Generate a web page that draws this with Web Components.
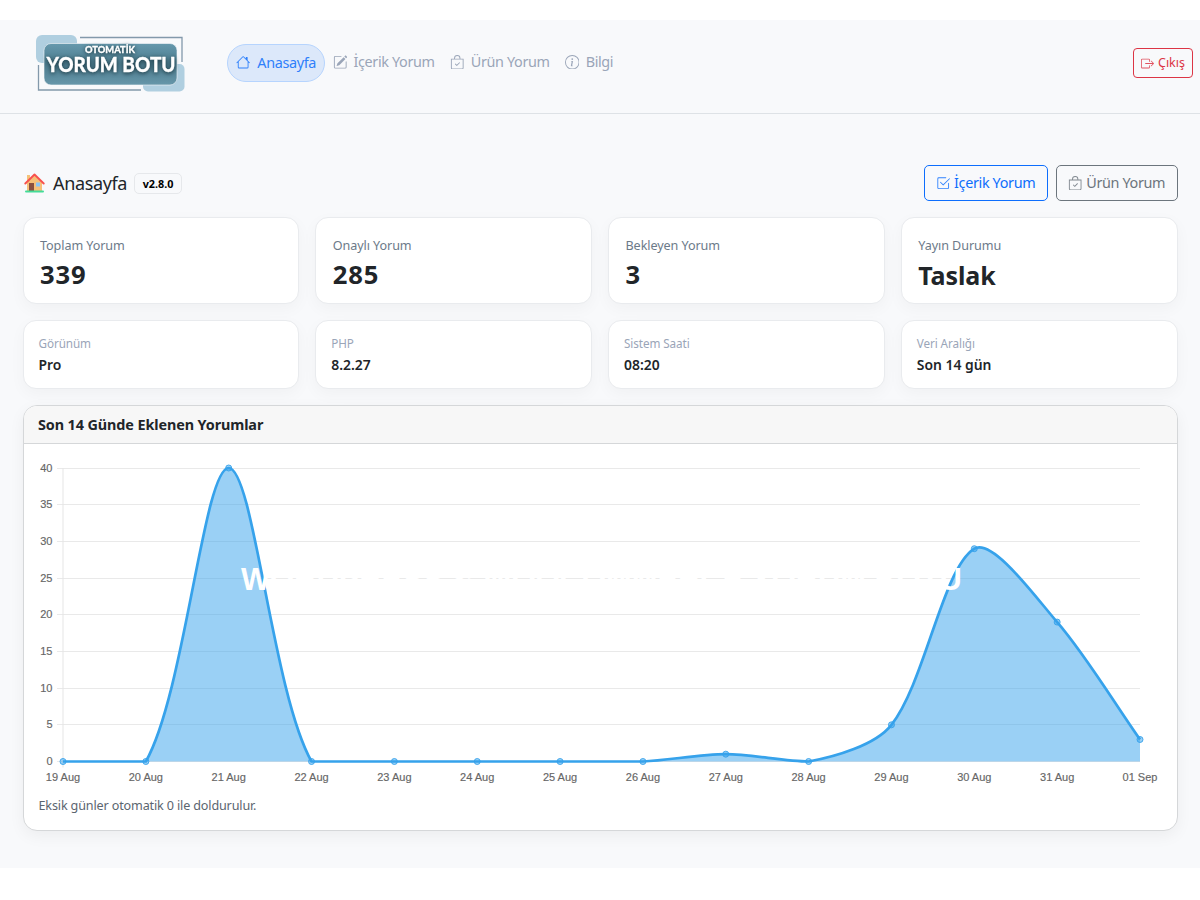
<!DOCTYPE html>
<html lang="tr">
<head>
<meta charset="utf-8">
<title>Otomatik Yorum Botu</title>
<style>
  body {
    margin: 0;
    background: #fff;
    color: #212529;
    font-family: "Noto Sans", "Open Sans", sans-serif;
  }
</style>
</head>
<body>
<app-shell>
  <app-header slot="header">
    <nav-item icon="house" active>Anasayfa</nav-item>
    <nav-item icon="pencil">İçerik Yorum</nav-item>
    <nav-item icon="bag">Ürün Yorum</nav-item>
    <nav-item icon="info">Bilgi</nav-item>
    <outline-button slot="end" icon="exit" variant="danger" size="sm">Çıkış</outline-button>
  </app-header>

  <page-title version="v2.8.0">
    Anasayfa
    <outline-button slot="actions" icon="check" variant="primary">İçerik Yorum</outline-button>
    <outline-button slot="actions" icon="bag" variant="secondary">Ürün Yorum</outline-button>
  </page-title>

  <card-row>
    <stat-card number label="Toplam Yorum">339</stat-card>
    <stat-card number label="Onaylı Yorum">285</stat-card>
    <stat-card number label="Bekleyen Yorum">3</stat-card>
    <stat-card label="Yayın Durumu">Taslak</stat-card>
  </card-row>
  <card-row>
    <stat-card small label="Görünüm">Pro</stat-card>
    <stat-card small label="PHP">8.2.27</stat-card>
    <stat-card small label="Sistem Saati">08:20</stat-card>
    <stat-card small label="Veri Aralığı">Son 14 gün</stat-card>
  </card-row>

  <chart-card>
    <span slot="title">Son 14 Günde Eklenen Yorumlar</span>
    <line-chart values="0,0,40,0,0,0,0,0,1,0,5,29,19,3"
      labels="19 Aug,20 Aug,21 Aug,22 Aug,23 Aug,24 Aug,25 Aug,26 Aug,27 Aug,28 Aug,29 Aug,30 Aug,31 Aug,01 Sep"></line-chart>
    <span slot="watermark">WORDPRESS &amp; WOOCOMMERCE YORUM BOTU</span>
    <span slot="note">Eksik günler otomatik 0 ile doldurulur.</span>
  </chart-card>
</app-shell>

<script>
const ICONS = {
  house: '<path d="M8.707 1.5a1 1 0 0 0-1.414 0L.646 8.146a.5.5 0 0 0 .708.708L2 8.207V13.5A1.5 1.5 0 0 0 3.5 15h9a1.5 1.5 0 0 0 1.5-1.5V8.207l.646.647a.5.5 0 0 0 .708-.708L13 5.793V2.5a.5.5 0 0 0-.5-.5h-1a.5.5 0 0 0-.5.5v1.293zM13 7.207V13.5a.5.5 0 0 1-.5.5h-9a.5.5 0 0 1-.5-.5V7.207l5-5z"/>',
  pencil: '<path d="M15.502 1.94a.5.5 0 0 1 0 .706L14.459 3.69l-2-2L13.502.646a.5.5 0 0 1 .707 0zm-1.75 2.456-2-2L4.939 9.21a.5.5 0 0 0-.121.196l-.805 2.414a.25.25 0 0 0 .316.316l2.414-.805a.5.5 0 0 0 .196-.12z"/><path d="M1 13.5A1.5 1.5 0 0 0 2.5 15h11a1.5 1.5 0 0 0 1.5-1.5v-6a.5.5 0 0 0-1 0v6a.5.5 0 0 1-.5.5h-11a.5.5 0 0 1-.5-.5v-11a.5.5 0 0 1 .5-.5H9a.5.5 0 0 0 0-1H2.5A1.5 1.5 0 0 0 1 2.5z"/>',
  bag: '<path d="M10.854 8.146a.5.5 0 0 1 0 .708l-3 3a.5.5 0 0 1-.708 0l-1.5-1.5a.5.5 0 0 1 .708-.708L7.5 10.793l2.646-2.647a.5.5 0 0 1 .708 0"/><path d="M8 1a2.5 2.5 0 0 1 2.5 2.5V4h-5v-.5A2.5 2.5 0 0 1 8 1m3.500 3v-.5a3.500 3.500 0 1 0-7 0V4H1v10a2 2 0 0 0 2 2h10a2 2 0 0 0 2-2V4zM2 5h12v9a1 1 0 0 1-1 1H3a1 1 0 0 1-1-1z"/>',
  info: '<path d="M8 15A7 7 0 1 1 8 1a7 7 0 0 1 0 14m0 1A8 8 0 1 0 8 0a8 8 0 0 0 0 16"/><path d="m8.930 6.588-2.290.287-.082.380.450.083c.294.070.352.176.288.469l-.738 3.468c-.194.897.105 1.319.808 1.319.545 0 1.178-.252 1.465-.598l.088-.416c-.200.176-.492.246-.686.246-.275 0-.375-.193-.304-.533zM9 4.500a1 1 0 1 1-2 0 1 1 0 0 1 2 0"/>',
  check: '<path d="M3 14.500A1.500 1.500 0 0 1 1.500 13V3A1.500 1.500 0 0 1 3 1.500h8a.5.5 0 0 1 0 1H3a.5.5 0 0 0-.5.5v10a.5.5 0 0 0 .5.5h10a.5.5 0 0 0 .5-.5V8a.5.5 0 0 1 1 0v5a1.500 1.500 0 0 1-1.500 1.500z"/><path d="m8.354 10.354 7-7a.5.5 0 0 0-.708-.708L8 9.293 5.354 6.646a.5.5 0 1 0-.708.708l3 3a.5.5 0 0 0 .708 0"/>',
  exit: '<path fill-rule="evenodd" d="M10 12.500a.5.5 0 0 1-.5.5h-8a.5.5 0 0 1-.5-.5v-9a.5.5 0 0 1 .5-.5h8a.5.5 0 0 1 .5.5v2a.5.5 0 0 0 1 0v-2A1.500 1.500 0 0 0 9.500 2h-8A1.500 1.500 0 0 0 0 3.500v9A1.500 1.500 0 0 0 1.500 14h8a1.500 1.500 0 0 0 1.500-1.500v-2a.5.5 0 0 0-1 0z"/><path fill-rule="evenodd" d="M15.854 8.354a.5.5 0 0 0 0-.708l-3-3a.5.5 0 0 0-.708.708L14.293 7.500H5.500a.5.5 0 0 0 0 1h8.793l-2.147 2.146a.5.5 0 0 0 .708.708z"/>'
};

function icon(name) {
  return `<svg viewBox="0 0 16 16" fill="currentColor">${ICONS[name]}</svg>`;
}

class BaseElement extends HTMLElement {
  constructor() {
    super();
    this.attachShadow({ mode: 'open' });
  }
  connectedCallback() {
    this.shadowRoot.innerHTML = this.render();
  }
}

customElements.define('app-shell', class extends BaseElement {
  render() {
    return `
<style>
  :host { display: block; padding: 20px 0 32px; }
  .page { background: #f8f9fb; height: 848px; }
  main { display: flex; flex-direction: column; gap: 16px; padding: 51px 22.500px 0; }
</style>
<div class="page">
  <slot name="header"></slot>
  <main><slot></slot></main>
</div>`;
  }
});

customElements.define('site-logo', class extends BaseElement {
  render() {
    return `
<style>
  :host { display: block; width: 150px; height: 58px; margin-top: 2px; }
  svg { display: block; }
  text { font-family: Lato, sans-serif; font-weight: 900; fill: #fff; stroke: #fff; stroke-width: .3px; }
  .shade { filter: drop-shadow(0 1px 2px #16323c); }
</style>
<svg width="150" height="58" viewBox="0 0 150 58">
  <defs>
    <linearGradient id="plate" x1="0" y1="0" x2="0" y2="1">
      <stop offset="0" stop-color="#6699ad"/><stop offset=".5" stop-color="#4c7b8d"/><stop offset="1" stop-color="#6797aa"/>
    </linearGradient>
  </defs>
  <path d="M44 3.500H146V28M2.500 31V56H105" fill="none" stroke="#8399ab" stroke-width="1.300"/>
  <rect x="0" y="1" width="41" height="28" rx="6" fill="#b0cfe0"/>
  <rect x="107" y="30" width="41.500" height="27.500" rx="5" fill="#b0cfe0"/>
  <rect x="8" y="9.500" width="133" height="41.500" rx="7" fill="url(#plate)" stroke="#f8f9fb" stroke-width=".6"/>
  <g class="shade">
    <text x="49" y="18.500" font-size="9.500" textLength="50" lengthAdjust="spacingAndGlyphs">OTOMATİK</text>
    <text x="10.500" y="38" font-size="20.500" textLength="129" lengthAdjust="spacingAndGlyphs">YORUM BOTU</text>
  </g>
</svg>`;
  }
});

customElements.define('app-header', class extends BaseElement {
  render() {
    return `
<style>
  :host {
    display: flex;
    align-items: center;
    box-sizing: border-box;
    height: 94px;
    padding: 0 7px 9px 36px;
    border-bottom: 1px solid #dee2e6;
  }
  nav { display: flex; align-items: center; margin-left: 41px; }
  .end { margin-left: auto; }
</style>
<site-logo></site-logo>
<nav><slot></slot></nav>
<div class="end"><slot name="end"></slot></div>`;
  }
});

customElements.define('nav-item', class extends BaseElement {
  render() {
    return `
<style>
  :host {
    display: flex;
    align-items: center;
    box-sizing: border-box;
    height: 38px;
    padding: 0 7.500px;
    gap: 6.500px;
    color: #9aa5b8;
    font-size: 14.400px;
    letter-spacing: -.35px;
    line-height: 20px;
    white-space: nowrap;
  }
  :host([active]) {
    width: 98px;
    padding: 0 8px;
    gap: 7px;
    margin-top: 1px;
    border: 1px solid #b6d4fe;
    border-radius: 19px;
    background: #dce8fa;
    color: #2f80fb;
  }
  svg { width: 14.500px; height: 14.500px; }
</style>
${icon(this.getAttribute('icon'))}<span><slot></slot></span>`;
  }
});

customElements.define('outline-button', class extends BaseElement {
  render() {
    return `
<style>
  :host {
    display: flex;
    align-items: center;
    justify-content: center;
    box-sizing: border-box;
    height: 36px;
    width: 124px;
    gap: 4px;
    border: 1px solid currentColor;
    border-radius: 5px;
    color: #0d6efd;
    font-size: 14.400px;
    letter-spacing: -.35px;
    line-height: 20px;
    white-space: nowrap;
  }
  :host([variant=secondary]) { color: #6c757d; width: 122px; }
  :host([variant=danger]) { color: #dc3545; }
  :host([size=sm]) {
    width: 60px;
    height: 30px;
    margin-top: 2px;
    border-radius: 4px;
    font-size: 12.500px;
    letter-spacing: 0;
  }
  svg { width: 14.400px; height: 14.400px; opacity: .85; }
  :host([size=sm]) svg { width: 13px; height: 13px; }
</style>
${icon(this.getAttribute('icon'))}<span><slot></slot></span>`;
  }
});

customElements.define('page-title', class extends BaseElement {
  render() {
    return `
<style>
  :host { display: flex; align-items: center; height: 36px; }
  .emoji { width: 21px; height: 20px; margin: 0 8px 0 1.500px; }
  h1 { margin: 0; font-size: 18px; font-weight: 400; line-height: 28px; letter-spacing: -.35px; }
  .version {
    box-sizing: border-box;
    height: 21px;
    margin-left: 7px;
    padding: 0 7.500px;
    border: 1px solid #e6e8eb;
    border-radius: 5px;
    font-size: 10.800px;
    font-weight: 700;
    line-height: 19px;
    color: #000;
  }
  .actions { display: flex; gap: 8px; margin-left: auto; }
</style>
<svg class="emoji" viewBox="0 0 21 20">
  <path d="M3 2h3v7H3z" fill="#f5c27a"/>
  <path d="M3 9.500 10.500 2 18 9.500V18H3z" fill="#f6bf78"/>
  <path d="M1.300 10.500 10.500 1.500l9.200 9" fill="none" stroke="#f8514e" stroke-width="1.900" stroke-linecap="round" stroke-linejoin="round"/>
  <path d="M5 10h5v8H5z" fill="#8a4f3f"/>
  <path d="M12 9.500h4v4h-4z" fill="#8cc4f3"/>
  <rect x="1" y="17.500" width="19" height="2" rx="1" fill="#43dc98"/>
</svg>
<h1><slot></slot></h1>
<span class="version">${this.getAttribute('version')}</span>
<div class="actions"><slot name="actions"></slot></div>`;
  }
});

customElements.define('card-row', class extends BaseElement {
  render() {
    return `
<style>
  :host { display: grid; grid-template-columns: repeat(4, 1fr); gap: 16px; }
</style>
<slot></slot>`;
  }
});

customElements.define('stat-card', class extends BaseElement {
  render() {
    return `
<style>
  :host {
    display: flex;
    flex-direction: column;
    box-sizing: border-box;
    height: 87px;
    padding: 19px 16.500px 0;
    border: 1px solid #e9ebee;
    border-radius: 13px;
    background: #fff;
    box-shadow: 0 5px 16px rgba(0, 0, 0, .035);
  }
  .label { font-size: 12.600px; line-height: 18px; color: #6c7a89; letter-spacing: -.08px; }
  .value { margin-top: 2px; font-size: 25px; font-weight: 700; line-height: 36px; letter-spacing: -.1px; }
  :host([number]) .value { font-size: 25.600px; letter-spacing: .8px; }
  :host([small]) { height: 69px; padding: 13px 15px 0; }
  :host([small]) .label { font-size: 11.700px; color: #9aa5b8; }
  :host([small]) .value { margin-top: 3px; font-size: 13.900px; font-weight: 600; line-height: 20px; letter-spacing: 0; }
</style>
<span class="label">${this.getAttribute('label')}</span>
<span class="value"><slot></slot></span>`;
  }
});

customElements.define('chart-card', class extends BaseElement {
  render() {
    return `
<style>
  :host {
    display: flex;
    flex-direction: column;
    position: relative;
    box-sizing: border-box;
    height: 426px;
    border: 1px solid #d5d7d9;
    border-radius: 14px;
    background: #fff;
    box-shadow: 0 5px 16px rgba(0, 0, 0, .05);
  }
  header {
    height: 37px;
    padding-left: 14.500px;
    border-bottom: 1px solid #d5d7d9;
    border-radius: 13px 13px 0 0;
    background: #f7f7f7;
    font-size: 14.400px;
    font-weight: 700;
    line-height: 37px;
    letter-spacing: -.1px;
  }
  .note {
    padding: 1px 15px 0;
    font-size: 12.600px;
    line-height: 18px;
    letter-spacing: -.15px;
    color: #5b6570;
  }
  /* promo line laid over the plot */
  .watermark {
    position: absolute;
    left: 217.500px;
    top: 156px;
    font: 700 30.850px/36px "Liberation Sans", Arial, sans-serif;
    color: #fff;
    white-space: nowrap;
  }
</style>
<header><slot name="title"></slot></header>
<slot></slot>
<div class="note"><slot name="note"></slot></div>
<div class="watermark"><slot name="watermark"></slot></div>`;
  }
});

const LEFT = 40, RIGHT = 1117, TOP = 24, BOTTOM = 317.500;
const MAX = 40, STEP = 5, TENSION = 0.3;

class LineChart extends BaseElement {
  // smooth curve, control points capped to the plot area
  curve(pts) {
    const cap = y => Math.min(BOTTOM, Math.max(TOP, y));
    const ctrl = pts.map((p, i) => {
      const prev = pts[i - 1] || p;
      const next = pts[i + 1] || p;
      const d01 = Math.hypot(p.x - prev.x, p.y - prev.y);
      const d12 = Math.hypot(next.x - p.x, next.y - p.y);
      const fa = TENSION * d01 / (d01 + d12);
      const fb = TENSION * d12 / (d01 + d12);
      return {
        in: [p.x - fa * (next.x - prev.x), cap(p.y - fa * (next.y - prev.y))],
        out: [p.x + fb * (next.x - prev.x), cap(p.y + fb * (next.y - prev.y))]
      };
    });
    let d = `M${pts[0].x} ${pts[0].y}`;
    for (let i = 1; i < pts.length; i++) {
      d += `C${ctrl[i - 1].out} ${ctrl[i].in} ${pts[i].x} ${pts[i].y}`;
    }
    return d;
  }

  render() {
    const values = this.getAttribute('values').split(',').map(Number);
    const labels = this.getAttribute('labels').split(',');
    const yAt = v => BOTTOM - v / MAX * (BOTTOM - TOP);
    const pts = values.map((v, i) => ({ x: LEFT + i * (RIGHT - LEFT) / (values.length - 1), y: yAt(v) }));
    const path = this.curve(pts);

    let grid = '';
    for (let v = 0; v <= MAX; v += STEP) {
      const y = Math.floor(yAt(v)) + 0.5;
      grid += `<path d="M34 ${y}H${RIGHT}" stroke="#e9e9e9"/><text x="29.500" y="${yAt(v) + 3.500}" text-anchor="end">${v}</text>`;
    }
    return `
<style>
  :host { display: block; height: 352px; margin-left: -.5px; }
  svg { display: block; }
  text { font: 11px "Liberation Sans", Arial, sans-serif; fill: #666; stroke: #666; stroke-width: .15px; }
</style>
<svg width="1153" height="352">
  ${grid}
  <path d="M${LEFT} ${TOP}V${BOTTOM + 6}" stroke="#e5e5e5"/>
  <path d="${path}L${RIGHT} ${BOTTOM}H${LEFT}Z" fill="#36a2eb" fill-opacity=".5"/>
  <path d="${path}" fill="none" stroke="#36a2eb" stroke-width="2.700" stroke-linejoin="round"/>
  ${pts.map(p => `<circle cx="${p.x}" cy="${p.y}" r="3" fill="#36a2eb" fill-opacity=".5" stroke="#36a2eb" stroke-width=".9"/>`).join('')}
  ${labels.map((l, i) => `<text x="${pts[i].x}" y="337" text-anchor="middle">${l}</text>`).join('')}
</svg>`;
  }
}
customElements.define('line-chart', LineChart);
</script>
</body>
</html>
